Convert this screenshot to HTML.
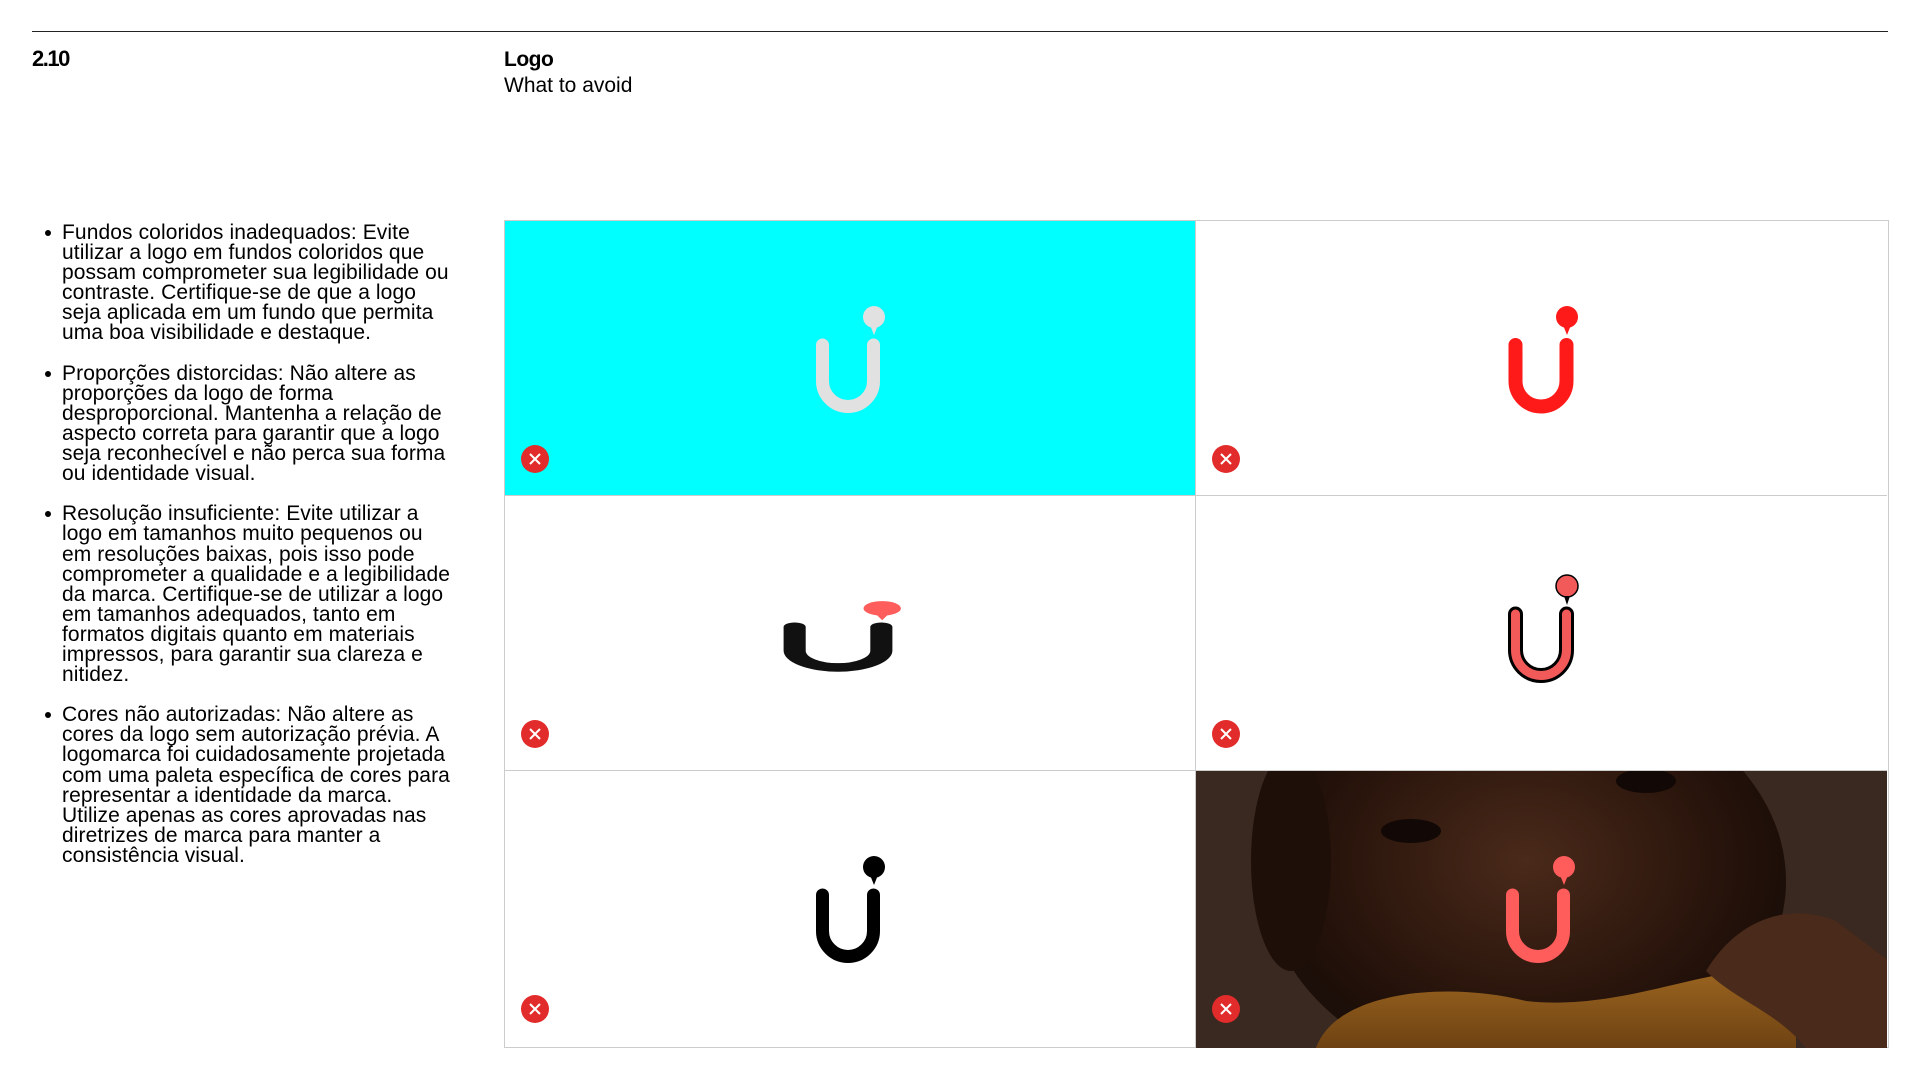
<!DOCTYPE html>
<html><head><meta charset="utf-8"><style>
*{margin:0;padding:0;box-sizing:border-box}
html,body{width:1920px;height:1080px;background:#fff;overflow:hidden;font-family:"Liberation Sans",sans-serif;color:#000}
.line{position:absolute;left:32px;top:31px;width:1856px;height:1px;background:#222}
.num{position:absolute;left:32px;top:46px;font-size:22px;font-weight:bold;letter-spacing:-1.5px}
.title{position:absolute;left:504px;top:47px;font-size:21px;line-height:26px}
.title b{display:block;letter-spacing:-0.5px}
.txt{position:absolute;left:62px;top:223px;font-size:21px;line-height:20.1px;letter-spacing:0.1px;white-space:nowrap}
.txt p{position:relative;margin-bottom:20.1px}
.txt p:before{content:"";position:absolute;left:-17px;top:7px;width:6px;height:6px;border-radius:50%;background:#000}
.grid{position:absolute;left:504px;top:220px;width:1385px;height:828px;border:1px solid #ccc}
.cell{position:absolute;width:691px;height:275px;border-right:1px solid #ccc;border-bottom:1px solid #ccc;overflow:hidden}
svg{position:absolute;left:0;top:0}
</style></head><body>
<div class="line"></div>
<div class="num">2.10</div>
<div class="title"><b>Logo</b>What to avoid</div>
<div class="txt">
<p>Fundos coloridos inadequados: Evite<br>utilizar a logo em fundos coloridos que<br>possam comprometer sua legibilidade ou<br>contraste. Certifique-se de que a logo<br>seja aplicada em um fundo que permita<br>uma boa visibilidade e destaque.</p>
<p>Proporções distorcidas: Não altere as<br>proporções da logo de forma<br>desproporcional. Mantenha a relação de<br>aspecto correta para garantir que a logo<br>seja reconhecível e não perca sua forma<br>ou identidade visual.</p>
<p>Resolução insuficiente: Evite utilizar a<br>logo em tamanhos muito pequenos ou<br>em resoluções baixas, pois isso pode<br>comprometer a qualidade e a legibilidade<br>da marca. Certifique-se de utilizar a logo<br>em tamanhos adequados, tanto em<br>formatos digitais quanto em materiais<br>impressos, para garantir sua clareza e<br>nitidez.</p>
<p>Cores não autorizadas: Não altere as<br>cores da logo sem autorização prévia. A<br>logomarca foi cuidadosamente projetada<br>com uma paleta específica de cores para<br>representar a identidade da marca.<br>Utilize apenas as cores aprovadas nas<br>diretrizes de marca para manter a<br>consistência visual.</p>
</div>
<div class="grid">
 <div class="cell" style="left:0;top:0;background:#00ffff">
  <svg width="691" height="275"><g fill="#e1e1e1"><path d="M317.5 124V160A25.5 25.5 0 0 0 368.5 160V124" fill="none" stroke="#e1e1e1" stroke-width="13" stroke-linecap="round"/><circle cx="369" cy="96" r="11"/><path d="M365 104L373 104L369 114Z"/></g>
  <circle cx="30" cy="238" r="14" fill="#e22b2b"/><path d="M25 233L35 243M35 233L25 243" stroke="#fff" stroke-width="2"/></svg>
 </div>
 <div class="cell" style="left:691px;top:0;border-right:none">
  <svg width="691" height="275"><g fill="#ff1a1a"><path d="M319.5 124V160A25.5 25.5 0 0 0 370.5 160V124" fill="none" stroke="#ff1a1a" stroke-width="14" stroke-linecap="round"/><circle cx="371" cy="96" r="11"/><path d="M367 104L375 104L371 114Z"/></g>
  <circle cx="30" cy="238" r="14" fill="#e22b2b"/><path d="M25 233L35 243M35 233L25 243" stroke="#fff" stroke-width="2"/></svg>
 </div>
 <div class="cell" style="left:0;top:275px">
  <svg width="691" height="275"><g transform="translate(333,49) scale(1.7,0.66) translate(-343,0)"><path d="M317.5 124V160A25.5 25.5 0 0 0 368.5 160V124" fill="none" stroke="#111" stroke-width="13" stroke-linecap="round"/><g fill="#ff5c5c"><circle cx="369" cy="96" r="11"/><path d="M365 104L373 104L369 114Z"/></g></g>
  <circle cx="30" cy="238" r="14" fill="#e22b2b"/><path d="M25 233L35 243M35 233L25 243" stroke="#fff" stroke-width="2"/></svg>
 </div>
 <div class="cell" style="left:691px;top:275px;border-right:none">
  <svg width="691" height="275"><g transform="translate(2,-6)"><path d="M317.5 124V160A25.5 25.5 0 0 0 368.5 160V124" fill="none" stroke="#000" stroke-width="15" stroke-linecap="round"/><path d="M317.5 124V160A25.5 25.5 0 0 0 368.5 160V124" fill="none" stroke="#f25a5a" stroke-width="9" stroke-linecap="round"/><circle cx="369" cy="96" r="11" fill="#f25a5a" stroke="#000" stroke-width="1.5"/><path d="M366 106L372 106L369 115Z"/></g>
  <circle cx="30" cy="238" r="14" fill="#e22b2b"/><path d="M25 233L35 243M35 233L25 243" stroke="#fff" stroke-width="2"/></svg>
 </div>
 <div class="cell" style="left:0;top:550px;border-bottom:none;height:277px">
  <svg width="691" height="277"><g fill="#000"><path d="M317.5 124V160A25.5 25.5 0 0 0 368.5 160V124" fill="none" stroke="#000" stroke-width="13" stroke-linecap="round"/><circle cx="369" cy="96" r="11"/><path d="M365 104L373 104L369 114Z"/></g>
  <circle cx="30" cy="238" r="14" fill="#e22b2b"/><path d="M25 233L35 243M35 233L25 243" stroke="#fff" stroke-width="2"/></svg>
 </div>
 <div class="cell" style="left:691px;top:550px;border:none;height:277px;background:#3a2920">
  <svg width="693" height="277">
   <defs>
    <radialGradient id="face" cx="0.5" cy="0.45" r="0.5"><stop offset="0" stop-color="#4a2a1a"/><stop offset="0.7" stop-color="#2a150c"/><stop offset="1" stop-color="#1c0e08"/></radialGradient>
    <linearGradient id="sw" x1="0" y1="0" x2="0" y2="1"><stop offset="0" stop-color="#9a6420"/><stop offset="1" stop-color="#6e4212"/></linearGradient>
   </defs>
   <ellipse cx="330" cy="110" rx="260" ry="200" fill="url(#face)"/>
   <ellipse cx="95" cy="90" rx="40" ry="110" fill="#1e0f08"/>
   <path d="M120 277 C140 220 250 210 330 230 C420 240 500 200 560 200 L600 250 L600 277Z" fill="url(#sw)"/>
   <path d="M510 200 C540 150 590 130 640 150 L693 190 L693 277 L610 277 C580 240 540 230 510 200Z" fill="#4a2a1a"/>
   <ellipse cx="215" cy="60" rx="30" ry="12" fill="#120805"/>
   <ellipse cx="450" cy="10" rx="30" ry="12" fill="#120805"/>
   <g fill="#ff5c5c"><path d="M316.5 124V160A25.5 25.5 0 0 0 367.5 160V124" fill="none" stroke="#ff5c5c" stroke-width="13" stroke-linecap="round"/><circle cx="368" cy="96" r="11"/><path d="M364 104L372 104L368 114Z"/></g>
   <circle cx="30" cy="238" r="14" fill="#e22b2b"/><path d="M25 233L35 243M35 233L25 243" stroke="#fff" stroke-width="2"/>
  </svg>
 </div>
</div>
</body></html>
